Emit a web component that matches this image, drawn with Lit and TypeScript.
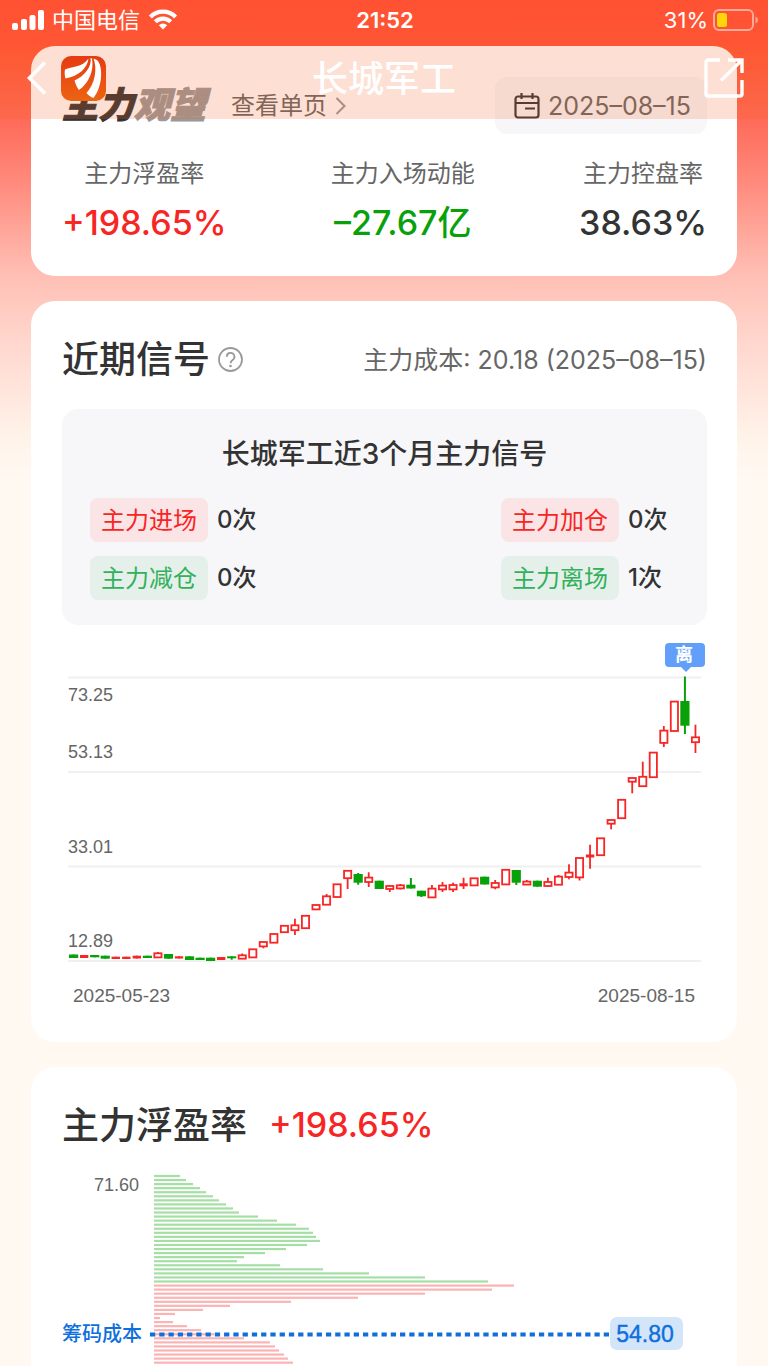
import { LitElement, html, svg, css } from "lit";
import { customElement } from "lit/decorators.js";
import { classMap } from "lit/directives/class-map.js";

type Candle = [kind: "r" | "g", top: number, bottom: number, high?: number, low?: number];

const CANDLES: Candle[] = [
  ["g", 954.5, 958], ["r", 955, 958], ["g", 955, 957.3], ["g", 955.7, 958.7], ["r", 956.7, 959],
  ["r", 956.7, 959], ["r", 955.7, 958.5], ["g", 955.7, 958], ["r", 953, 957.7, 952], ["g", 954, 958.7],
  ["r", 956.3, 958.5], ["g", 956.3, 960], ["g", 957.7, 960], ["g", 957.7, 961], ["r", 957, 960],
  ["g", 956.3, 958.3, 956.3, 959.7], ["r", 955, 959, 953.5], ["r", 949, 957.7], ["r", 941.7, 946.7, 941.7, 948.3], ["r", 933.7, 943],
  ["r", 925.5, 932.5], ["r", 925, 930.5, 918.7, 935], ["r", 915.5, 928.5], ["r", 904.7, 909.7], ["r", 896, 905, 894],
  ["r", 884, 897.3], ["r", 870.5, 878.5, 870.5, 889], ["g", 874, 882.7, 873, 884.7], ["r", 877.3, 882.3, 872.3, 887], ["g", 880.7, 889],
  ["r", 885.7, 889.3, 885.7, 892], ["r", 885, 888.7, 884, 889.5], ["g", 884.7, 888.5, 878], ["g", 890.7, 896.3, 890.7, 897], ["r", 888.3, 897.7, 885],
  ["r", 885.3, 889.7, 882, 892], ["r", 884.7, 889.7, 882.7, 892], ["r", 883.3, 886.3, 877.7, 889], ["r", 878, 885.7], ["g", 876.7, 884.5],
  ["r", 882.7, 887.7, 880, 889.3], ["r", 869.5, 884.7], ["g", 870, 882.7, 870, 885], ["r", 881.3, 884.9, 880], ["g", 880.7, 886.7],
  ["r", 881.7, 886.3, 877.7], ["r", 876.3, 885, 875], ["r", 872.3, 877.3, 864.3, 879.3], ["r", 857.7, 877.7, 857.7, 880.5], ["r", 854.5, 857.5, 844.7, 868.7],
  ["r", 838, 855.5], ["r", 819.7, 824, 819.7, 829.3], ["r", 799.5, 818.5], ["r", 777.7, 782, 777.7, 793.3], ["r", 776.5, 786.5, 761.7],
  ["r", 752.3, 777.5], ["r", 730.3, 743.2, 726, 747], ["r", 701.3, 731.3], ["g", 701, 725.7, 676.5, 734], ["r", 737, 742.5, 724.7, 753],
];

const GREEN_BARS = [
  26, 32, 39, 46, 52, 59, 65, 72, 79, 85, 104, 123, 142, 155, 159, 162, 166, 153, 132, 111, 90, 83, 126,
  169, 215, 271, 334,
];
const RED_BARS = [360, 338, 271, 204, 137, 76, 49, 21, 6, 19, 33, 47, 60, 90, 116, 121, 125, 130, 134, 139];

@customElement("status-bar")
export class StatusBar extends LitElement {
  static styles = css`
    :host {
      display: grid;
      grid-template-columns: 1fr auto 1fr;
      align-items: center;
      height: 40px;
      padding: 0 10px 6px 12px;
      color: #fff;
      font: 22px/30px Inter, "Noto Sans CJK SC", sans-serif;
    }
    .side {
      display: flex;
      align-items: center;
      gap: 8px;
    }
    .end {
      justify-content: flex-end;
      gap: 5px;
    }
    .time {
      font-weight: 600;
    }
    svg {
      display: block;
    }
  `;
  render() {
    return html`
      <div class="side">
        <svg width="32" height="20" viewBox="0 0 32 20" fill="#fff" aria-hidden="true">
          <rect x="0" y="13" width="6" height="7" rx="2" />
          <rect x="9" y="9" width="6" height="11" rx="2" />
          <rect x="17.500" y="5" width="6" height="15" rx="2" />
          <rect x="26" y="0" width="6" height="20" rx="2" />
        </svg>
        <span>中国电信</span>
        <svg width="30" height="22" viewBox="0 0 30 22" fill="none" stroke="#fff" aria-hidden="true">
          <path d="M2.400 7.900A17.800 17.800 0 0 1 27.600 7.900" stroke-width="4.300" />
          <path d="M7.300 12.800A10.900 10.900 0 0 1 22.700 12.800" stroke-width="4.300" />
          <path d="M10.800 16.300A6 6 0 0 1 19.200 16.300L15 20.500Z" fill="#fff" stroke="none" />
        </svg>
      </div>
      <span class="time">21:52</span>
      <div class="side end">
        <span>31%</span>
        <svg width="45" height="22" viewBox="0 0 45 22" aria-hidden="true">
          <rect x="1" y="1" width="39" height="20" rx="5" fill="none" stroke="#fff" stroke-opacity=".5" stroke-width="2" />
          <rect x="4" y="4" width="10" height="14" rx="2.500" fill="#ffd60a" />
          <path d="M42.500 7.500q2.500 1 2.500 3.500t-2.500 3.500z" fill="#fff" fill-opacity=".5" />
        </svg>
      </div>
    `;
  }
}

@customElement("nav-bar")
export class NavBar extends LitElement {
  static styles = css`
    :host {
      display: grid;
      grid-template-columns: 1fr auto 1fr;
      align-items: center;
      height: 64px;
      padding: 0 24px 9px;
      background: rgba(245, 100, 35, 0.2);
      color: #fff;
      font-family: Inter, "Noto Sans CJK SC", sans-serif;
    }
    .side {
      display: flex;
      align-items: center;
      gap: 13px;
    }
    .end {
      justify-content: flex-end;
    }
    .title {
      margin: 0;
      padding-top: 2px;
      font-size: 36px;
      line-height: 48px;
      font-weight: 500;
    }
    button {
      display: block;
      padding: 0;
      border: 0;
      background: none;
    }
    svg {
      display: block;
    }
  `;
  render() {
    return html`
      <div class="side">
        <button aria-label="返回">
          <svg width="24" height="36" viewBox="0 0 24 36" fill="none" stroke="#fff" stroke-width="3.600">
            <path d="M21 2.500 5.500 18 21 33.500" />
          </svg>
        </button>
        <svg width="45" height="45" viewBox="0 0 45 45" aria-hidden="true">
          <defs>
            <linearGradient id="logo" x1="0" y1="0" x2="0" y2="1">
              <stop offset="0" stop-color="#e63a12" />
              <stop offset="1" stop-color="#ec6412" />
            </linearGradient>
          </defs>
          <rect width="45" height="45" rx="10" fill="url(#logo)" />
          <g fill="#fff">
            <path d="M4 13.500C11 10 21 12 27.500 2.500C26.500 12 18 20 4.500 22.500C3.500 19 3.500 16 4 13.500Z" />
            <path d="M29.500 2C31 10 24 20 13.500 24.500C14.500 28 16 31.500 18 34C27 28 33.500 15 31 2.500Z" />
            <path d="M32.500 2.500C36.500 13 34 28 25.500 37C27.500 39.500 30 41 32.500 42C41.500 31 42.500 10 36 4Z" />
          </g>
        </svg>
      </div>
      <h1 class="title">长城军工</h1>
      <div class="side end">
        <button aria-label="分享">
          <svg width="40" height="40" viewBox="0 0 40 40" fill="none" stroke="#fff" stroke-width="3.400">
            <path d="M16 2H4a2 2 0 0 0-2 2V36a2 2 0 0 0 2 2H36a2 2 0 0 0 2-2V22" />
            <path d="M24 2H38V15M37 3 17 22.500" />
          </svg>
        </button>
      </div>
    `;
  }
}

@customElement("candle-chart")
export class CandleChart extends LitElement {
  static styles = css`
    :host {
      display: block;
    }
    svg {
      display: block;
      width: 100%;
    }
    .axis {
      font: 18px "Liberation Sans", sans-serif;
      fill: #666;
    }
    .date {
      font: 19px "Liberation Sans", sans-serif;
      fill: #666;
    }
    .flag {
      font: 700 18px "Noto Sans CJK SC", sans-serif;
      fill: #fff;
    }
  `;
  private candle([kind, top, bottom, high = top, low = bottom]: Candle, i: number) {
    const x = 73.6 + i * 10.54;
    if (kind === "g") {
      return svg`<g fill="#09a109">
        <rect x=${x - 4.6} y=${top} width="9.200" height=${bottom - top} />
        <rect x=${x - 1} y=${high} width="2" height=${low - high} />
      </g>`;
    }
    const height = bottom - top;
    const body =
      height < 3.5
        ? svg`<rect x=${x - 4.2} y=${top} width="8.400" height=${height} fill="#f82525" />`
        : svg`<rect x=${x - 3.6} y=${top + 0.3} width="7.200" height=${height - 0.6} fill="#fff" stroke="#f82525" stroke-width="1.800" />`;
    return svg`<rect x=${x - 0.9} y=${high} width="1.800" height=${low - high} fill="#f82525" />${body}`;
  }
  render() {
    return html`
      <svg viewBox="62 640 645 372" role="img" aria-label="长城军工近3个月走势">
        ${[677.5, 772, 866.5, 961].map(
          (y) => svg`<line x1="68" x2="701" y1=${y} y2=${y} stroke="#f0f0f0" stroke-width="2" />`
        )}
        ${CANDLES.map((c, i) => this.candle(c, i))}
        <text class="axis" x="68" y="701">73.25</text>
        <text class="axis" x="68" y="758">53.13</text>
        <text class="axis" x="68" y="853">33.01</text>
        <text class="axis" x="68" y="947">12.89</text>
        <text class="date" x="73" y="1002">2025-05-23</text>
        <text class="date" x="695" y="1002" text-anchor="end">2025-08-15</text>
        <path
          d="M669 643h32q4 0 4 4v16q0 4-4 4h-10l-5 5-5-5h-12q-4 0-4-4v-16q0-4 4-4z"
          fill="#629ffb"
        />
        <text class="flag" x="684" y="661" text-anchor="middle">离</text>
      </svg>
    `;
  }
}

@customElement("chip-chart")
export class ChipChart extends LitElement {
  static styles = css`
    :host {
      display: block;
    }
    svg {
      display: block;
      width: 100%;
    }
    .axis {
      font: 18px "Liberation Sans", sans-serif;
      fill: #666;
    }
    .cost {
      font: 500 20px "Noto Sans CJK SC", sans-serif;
      fill: #0f6fdc;
    }
    .value {
      font: 23px "Liberation Sans", sans-serif;
      fill: #0f6fdc;
      stroke: #0f6fdc;
      stroke-width: 0.4px;
    }
  `;
  render() {
    const bars = [...GREEN_BARS, ...RED_BARS];
    return html`
      <svg viewBox="62 1160 645 230" role="img" aria-label="筹码分布">
        ${bars.map(
          (w, i) => svg`<rect x="154" y=${1174.9 + i * 4.058} width=${w} height="2.200"
            fill=${i < GREEN_BARS.length ? "#a6dfa6" : "#fbb3b3"} />`
        )}
        <text class="axis" x="139" y="1191" text-anchor="end">71.60</text>
        <line x1="150" x2="610" y1="1334.500" y2="1334.500" stroke="#0f6fdc" stroke-width="4" stroke-dasharray="5.260 4" />
        <text class="cost" x="62" y="1341">筹码成本</text>
        <rect x="610" y="1317" width="73" height="33" rx="7" fill="#d3e5f9" />
        <text class="value" x="645" y="1342" text-anchor="middle">54.80</text>
      </svg>
    `;
  }
}

@customElement("app-root")
export class AppRoot extends LitElement {
  static styles = css`
    :host {
      display: block;
      position: relative;
      height: 100vh;
      overflow: hidden;
      background: #fff9f2 linear-gradient(#ff5233, #ff5535 46px, #ff6a58 119px, #ff897b 180px, #ffbfb4 275px, #ffd6cd 340px, #fff4ea 440px, #fff9f2 480px) 0 0 / 100% 480px no-repeat;
      color: #333;
      font-family: Inter, "Noto Sans CJK SC", sans-serif;
    }
    .header {
      position: absolute;
      top: 0;
      left: 0;
      right: 0;
    }
    .page {
      display: flex;
      flex-direction: column;
      gap: 25px;
      padding: 46px 31px 0;
    }
    .card {
      padding: 31px 30px 30px 31px;
      border-radius: 24px;
      background: #fff;
    }
    .row {
      display: flex;
      align-items: center;
      height: 54px;
    }
    .stance {
      display: flex;
      height: 57px;
    }
    .mood {
      margin: 0;
      font-size: 36px;
      line-height: 57px;
      font-weight: 900;
      font-style: italic;
      -webkit-text-stroke: 1px currentColor;
    }
    .muted {
      color: #999;
    }
    .more {
      display: flex;
      align-items: center;
      gap: 8px;
      margin-left: 25px;
      color: #666;
      font-size: 24px;
      line-height: 34px;
      text-decoration: none;
    }
    .date {
      display: flex;
      align-items: center;
      gap: 8px;
      height: 57px;
      margin-left: auto;
      padding: 0 16px 0 19px;
      border: 0;
      border-radius: 12px;
      background: #f7f7fa;
      color: #666;
      font: 25px/34px Inter, sans-serif;
    }
    .stats {
      display: flex;
      justify-content: space-between;
      margin: 23px 0 0;
      text-align: center;
    }
    .stats dt {
      color: #666;
      font-size: 24px;
      line-height: 34px;
    }
    .stats dd {
      margin: 8px 0 0;
      font-size: 34px;
      line-height: 47px;
      font-weight: 500;
    }
    .up {
      color: #f82525;
    }
    .down {
      color: #09a109;
    }
    .heading {
      margin: 0;
      padding-top: 2px;
      font-size: 37px;
      line-height: 52px;
      font-weight: 500;
    }
    .help {
      display: block;
      margin-left: 8px;
      padding: 0;
      border: 0;
      background: none;
    }
    .cost {
      margin-left: auto;
      padding-top: 2px;
      color: #666;
      font-size: 25px;
      line-height: 34px;
    }
    .summary {
      margin: 23px 0 15px;
      padding: 25px 28px;
      border-radius: 16px;
      background: #f7f7fa;
    }
    .caption {
      margin: 0 0 24px;
      text-align: center;
      font-size: 28px;
      line-height: 40px;
      font-weight: 500;
    }
    .signals {
      display: grid;
      grid-template-columns: auto auto;
      justify-content: space-between;
      gap: 14px;
      margin: 0;
      padding: 0;
      list-style: none;
    }
    .signal {
      display: flex;
      align-items: center;
      gap: 9px;
      min-width: 178px;
      height: 44px;
      font-size: 24px;
      line-height: 46px;
      font-weight: 500;
    }
    .tag {
      height: 44px;
      padding: 0 11px;
      border-radius: 8px;
      font-weight: 400;
    }
    .buy {
      background: #fae4e5;
      color: #f82525;
    }
    .sell {
      background: #e5f0ea;
      color: #33b05c;
    }
    .profit {
      margin-left: 22px;
      font-size: 34px;
      line-height: 54px;
      font-weight: 500;
    }
    .chips {
      display: block;
      margin-top: 8px;
    }
    svg {
      display: block;
    }
  `;

  private signal(name: string, count: number, buy: boolean) {
    return html`<li class="signal">
      <span class=${classMap({ tag: true, buy, sell: !buy })}>${name}</span><span>${count}次</span>
    </li>`;
  }

  render() {
    return html`
      <main class="page">
        <section class="card">
          <div class="stance">
            <h2 class="mood">主力<span class="muted">观望</span></h2>
            <a class="more" href="#detail">
              查看单页
              <svg width="11" height="18" viewBox="0 0 11 18" fill="none" stroke="#999" stroke-width="2">
                <path d="M1.500 1 9.500 9l-8 8" />
              </svg>
            </a>
            <button class="date">
              <svg width="26" height="26" viewBox="0 0 26 26" fill="none" stroke="#333" stroke-width="2.200">
                <rect x="1.500" y="3.500" width="23" height="21" rx="2.500" />
                <path d="M1.500 10h23M7.500 0v6M18.500 0v6M11 15.500h10" />
              </svg>
              <span>2025–08–15</span>
            </button>
          </div>
          <dl class="stats">
            <div><dt>主力浮盈率</dt><dd class="up">+198.65%</dd></div>
            <div><dt>主力入场动能</dt><dd class="down">–27.67亿</dd></div>
            <div><dt>主力控盘率</dt><dd>38.63%</dd></div>
          </dl>
        </section>

        <section class="card">
          <div class="row">
            <h2 class="heading">近期信号</h2>
            <button class="help" aria-label="说明">
              <svg width="25" height="25" viewBox="0 0 25 25" fill="none" stroke="#999" stroke-width="1.800">
                <circle cx="12.500" cy="12.500" r="11.500" />
                <path d="M8.800 9.800a3.800 3.800 0 1 1 5.800 3.100c-1.400.9-2 1.500-2 3.300" />
                <circle cx="12.500" cy="19" r="1.300" fill="#999" stroke="none" />
              </svg>
            </button>
            <span class="cost">主力成本: 20.18 (2025–08–15)</span>
          </div>
          <div class="summary">
            <h3 class="caption">长城军工近3个月主力信号</h3>
            <ul class="signals">
              ${this.signal("主力进场", 0, true)} ${this.signal("主力加仓", 0, true)}
              ${this.signal("主力减仓", 0, false)} ${this.signal("主力离场", 1, false)}
            </ul>
          </div>
          <candle-chart></candle-chart>
        </section>

        <section class="card">
          <div class="row">
            <h2 class="heading">主力浮盈率</h2>
            <span class="profit up">+198.65%</span>
          </div>
          <chip-chart class="chips"></chip-chart>
        </section>
      </main>
      <header class="header">
        <status-bar></status-bar>
        <nav-bar></nav-bar>
      </header>
    `;
  }
}
